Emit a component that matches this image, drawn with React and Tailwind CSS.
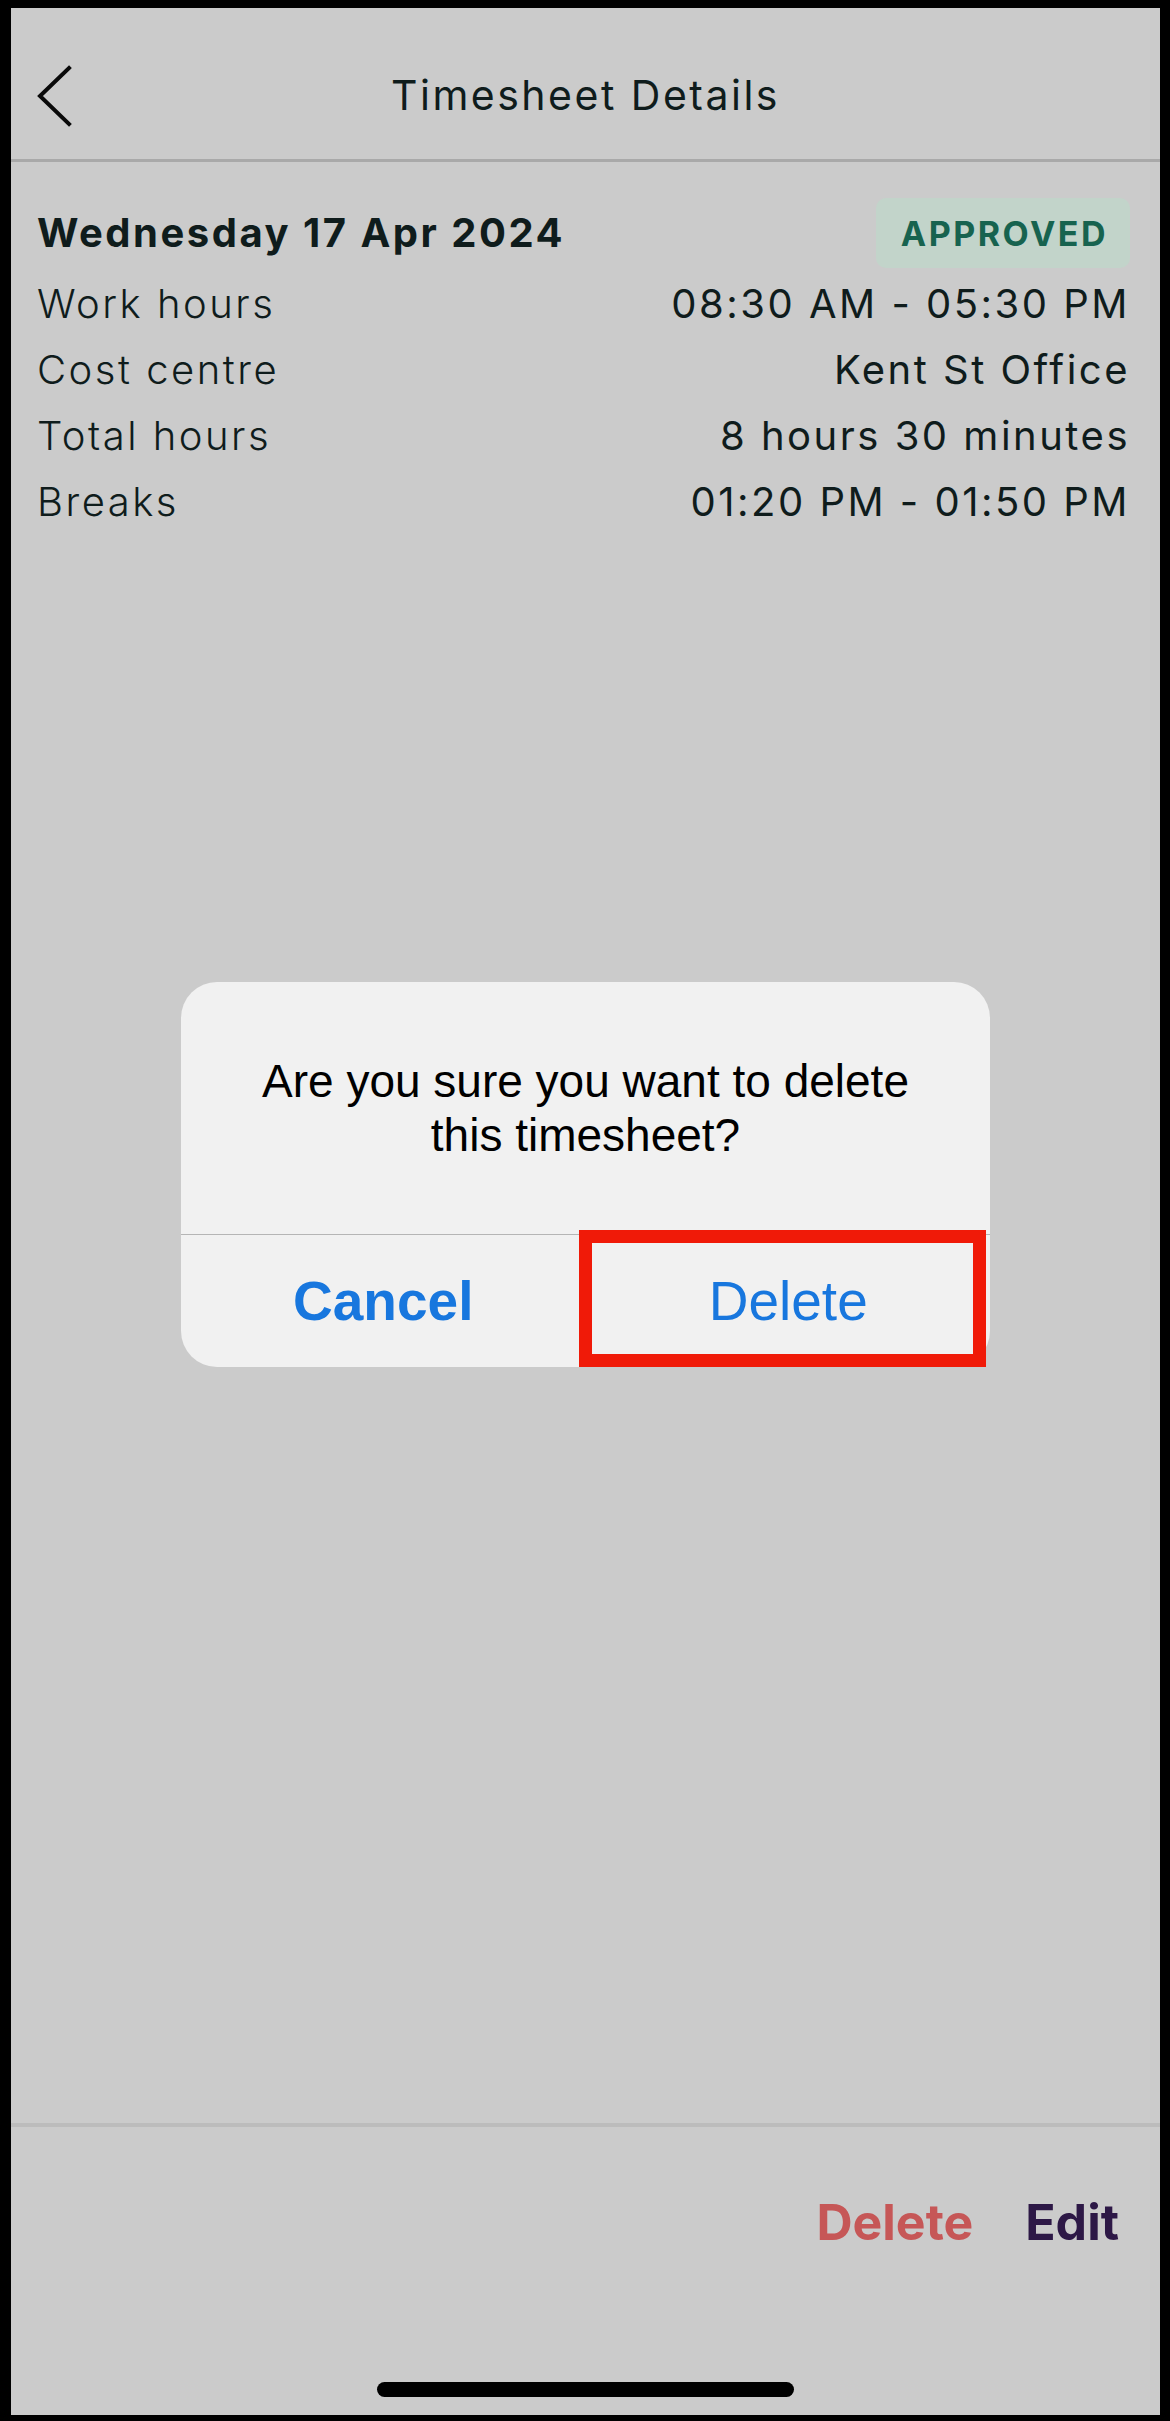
import React from "react";

const rows = [
  { label: "Work hours", value: "08:30 AM - 05:30 PM" },
  { label: "Cost centre", value: "Kent St Office" },
  { label: "Total hours", value: "8 hours 30 minutes" },
  { label: "Breaks", value: "01:20 PM - 01:50 PM" },
];

function BackChevron() {
  return (
    <svg width="40" height="64" viewBox="0 0 40 64" fill="none">
      <path
        d="M34 4 L5 32 L34 60"
        stroke="#0a0a0a"
        strokeWidth="4"
        strokeLinecap="square"
        strokeLinejoin="miter"
      />
    </svg>
  );
}

function ConfirmDialog() {
  return (
    <div
      className="absolute left-[170px] top-[974px] w-[809px] rounded-[36px] bg-[#f1f1f1]"
      style={{ fontFamily: '"Liberation Sans", Arial, sans-serif' }}
    >
      <div className="h-[252px] flex flex-col items-center justify-center text-center text-[46px] leading-[54px] text-black">
        <p>Are you sure you want to delete</p>
        <p>this timesheet?</p>
      </div>
      <div className="h-px bg-[#b5b5b5]" />
      <div className="grid grid-cols-2 h-[132px]">
        <button className="flex items-center justify-center text-[55px] font-bold text-[#1877de]">
          Cancel
        </button>
        <button className="flex items-center justify-center text-[55px] text-[#1877de] border-l border-[#b5b5b5]">
          Delete
        </button>
      </div>
      {/* highlight annotation */}
      <div className="absolute left-[398px] top-[248px] w-[407px] h-[137px] border-[13px] border-[#f01a08] pointer-events-none" />
    </div>
  );
}

export default function App() {
  return (
    <div className="w-[1170px] h-[2421px] bg-black pt-[8px] pl-[11px] pr-[10px] pb-[6px]">
      <div
        className="relative h-full flex flex-col bg-[#cbcbcb] text-[#0f1c1c]"
        style={{ fontFamily: "Inter, sans-serif" }}
      >
        <header className="h-[151px] pt-[24px] grid grid-cols-[1fr_auto_1fr] items-center">
          <div className="pl-[24px]">
            <BackChevron />
          </div>
          <h1 className="text-[41px] font-normal tracking-[2.5px]">
            Timesheet Details
          </h1>
          <div />
        </header>
        <div className="h-[3px] bg-[#a9a9a9]" />

        <section className="pt-[36px] pl-[26px] pr-[30px]">
          <div className="flex items-center justify-between">
            <h2 className="text-[40px] font-bold tracking-[2.5px]">
              Wednesday 17 Apr 2024
            </h2>
            <span className="h-[70px] pl-[25px] pr-[22px] flex items-center rounded-[10px] bg-[#c2d4ca] text-[#17634f] text-[34px] font-bold tracking-[2.5px]">
              APPROVED
            </span>
          </div>
          <div className="mt-[3px]">
            {rows.map((row) => (
              <div
                key={row.label}
                className="h-[66px] flex items-center justify-between text-[40px] tracking-[2.5px]"
              >
                <span className="font-light">{row.label}</span>
                <span className="font-normal">{row.value}</span>
              </div>
            ))}
          </div>
        </section>

        <div className="flex-1" />

        <div className="h-[4px] bg-[#bcbcbc]" />
        <footer className="h-[288px] flex flex-col">
          <div className="pt-[65px] pr-[41px] flex justify-end gap-[52px] text-[50px] font-bold leading-[60px]">
            <button className="text-[#c65757]">Delete</button>
            <button className="text-[#2d1846]">Edit</button>
          </div>
          <div className="mt-auto mb-[18px] mx-auto w-[417px] h-[15px] rounded-full bg-black" />
        </footer>

        <ConfirmDialog />
      </div>
    </div>
  );
}
